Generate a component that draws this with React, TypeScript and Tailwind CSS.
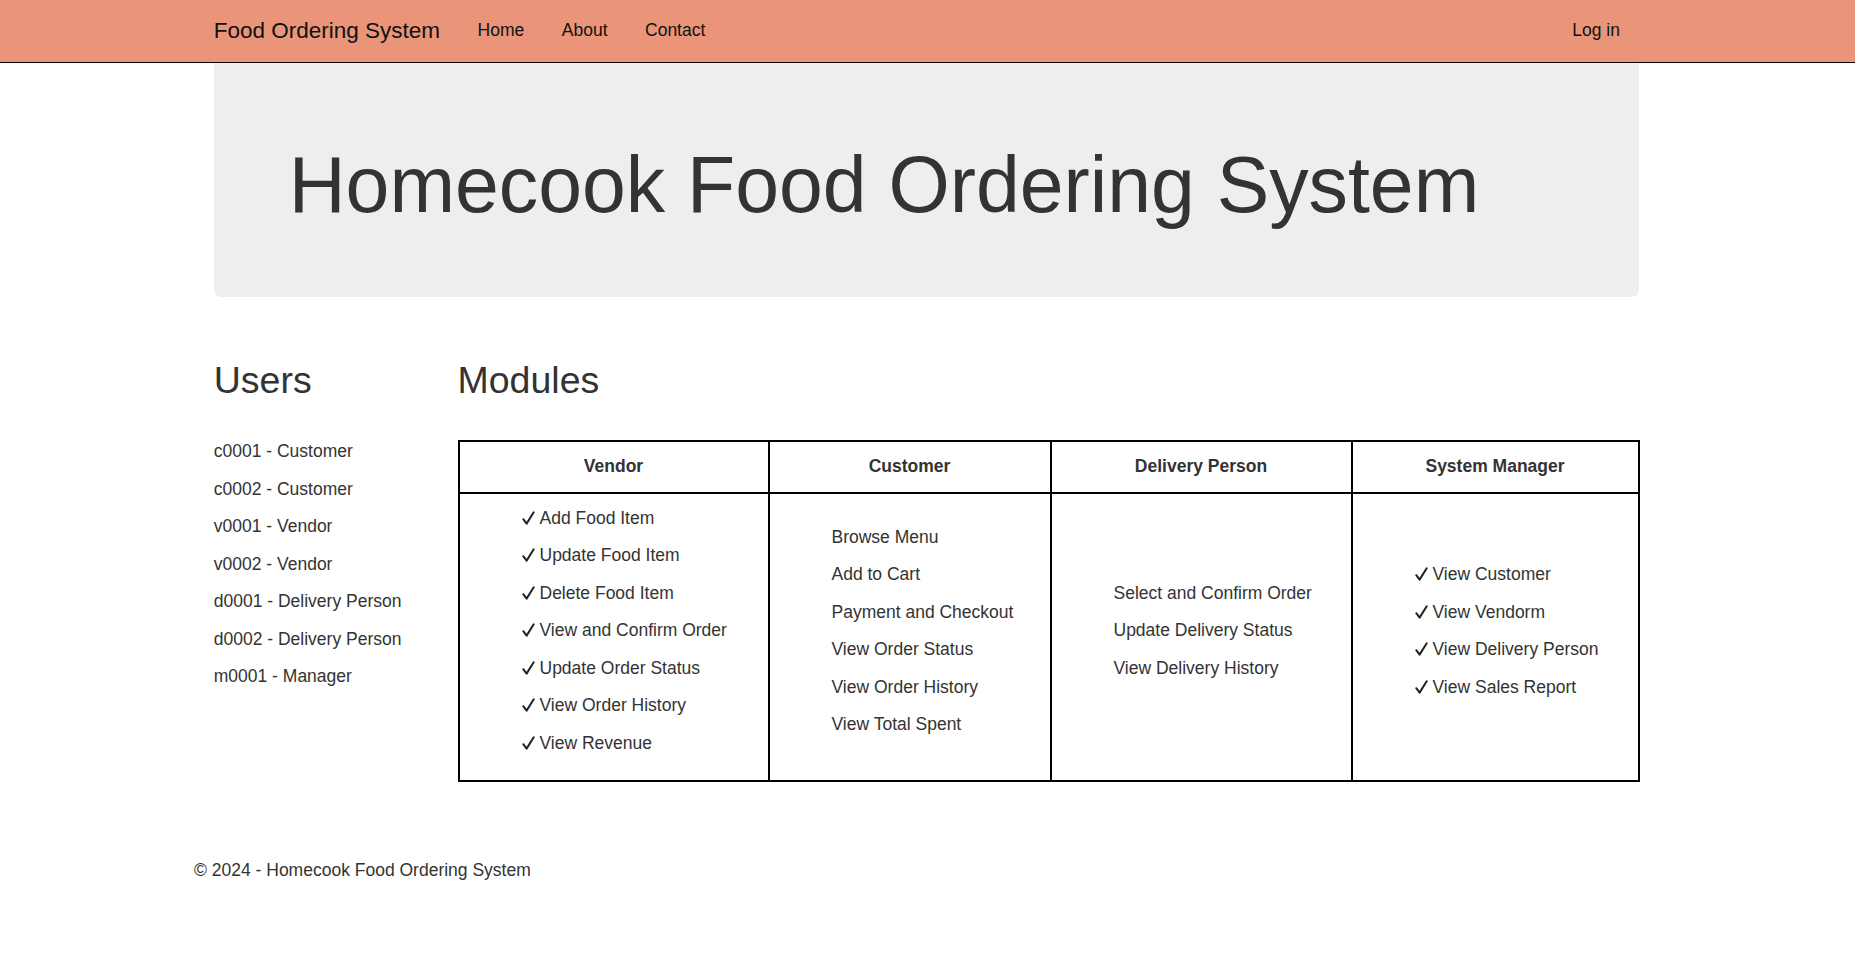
import React from "react";

const vendorItems = [
    "Add Food Item",
    "Update Food Item",
    "Delete Food Item",
    "View and Confirm Order",
    "Update Order Status",
    "View Order History",
    "View Revenue",
];

const customerItems = [
    "Browse Menu",
    "Add to Cart",
    "Payment and Checkout",
    "View Order Status",
    "View Order History",
    "View Total Spent",
];

const deliveryItems = ["Select and Confirm Order", "Update Delivery Status", "View Delivery History"];

const managerItems = ["View Customer", "View Vendorm", "View Delivery Person", "View Sales Report"];

const users = [
    "c0001 - Customer",
    "c0002 - Customer",
    "v0001 - Vendor",
    "v0002 - Vendor",
    "d0001 - Delivery Person",
    "d0002 - Delivery Person",
    "m0001 - Manager",
];

function Check() {
    return (
        <svg
            width="13"
            height="14"
            viewBox="0 0 13 14"
            className="inline-block mr-[5px] align-[-1px]"
            fill="none"
            stroke="#222"
            strokeWidth="2"
            strokeLinecap="round"
            strokeLinejoin="round"
        >
            <path d="M1.3 8.2 L4.6 12.6 L11.7 1.3" />
        </svg>
    );
}

function ItemList({ items, checked }: { items: string[]; checked?: boolean }) {
    return (
        <ul className="pl-[52px] pb-[12.5px] flex flex-col gap-[12.5px] text-left">
            {items.map((item) => (
                <li key={item} className="leading-[25px] whitespace-nowrap">
                    {checked && <Check />}
                    {item}
                </li>
            ))}
        </ul>
    );
}

export default function App() {
    return (
        <div className="min-h-screen bg-white text-[#333] font-['Liberation_Sans',Arial,sans-serif] text-[17.5px] leading-[25px]">
            <nav className="h-[63px] bg-[#ea957a] border-b border-black">
                <div className="ml-[195px] w-[1462.5px] px-[18.75px] h-full flex items-center pb-[2px] text-[#111]">
                    <a className="text-[22.5px] leading-[25px] mr-[18.75px]">Food Ordering System</a>
                    <a className="px-[18.75px]">Home</a>
                    <a className="px-[18.75px]">About</a>
                    <a className="px-[18.75px]">Contact</a>
                    <a className="ml-auto px-[18.75px]">Log in</a>
                </div>
            </nav>

            <div className="ml-[195px] w-[1462.5px] px-[18.75px]">
                <div className="bg-[#eeeeee] rounded-b-[7.5px] pl-[75px] pt-[79px] pb-[68px]">
                    <h1 className="text-[78.75px] leading-[87px] text-[#333] whitespace-nowrap">
                        Homecook Food Ordering System
                    </h1>
                </div>

                <div className="flex mt-[62.5px]">
                    <div className="w-[243.75px] shrink-0">
                        <h2 className="text-[37.5px] leading-[41.25px]">Users</h2>
                        <div className="pt-[38.5px] flex flex-col gap-[12.5px]">
                            {users.map((u) => (
                                <p key={u} className="leading-[25px]">
                                    {u}
                                </p>
                            ))}
                        </div>
                    </div>

                    <div className="flex-1">
                        <h2 className="text-[37.5px] leading-[41.25px]">Modules</h2>
                        <div className="pt-[39px]">
                            <table className="table-fixed border-collapse border-2 border-black w-[1180px]">
                                <colgroup>
                                    <col className="w-[310px]" />
                                    <col className="w-[282px]" />
                                    <col className="w-[301px]" />
                                    <col className="w-[287px]" />
                                </colgroup>
                                <thead>
                                    <tr>
                                        <th className="border-2 border-black py-[12.5px] font-bold text-center">Vendor</th>
                                        <th className="border-2 border-black py-[12.5px] font-bold text-center">Customer</th>
                                        <th className="border-2 border-black py-[12.5px] font-bold text-center">Delivery Person</th>
                                        <th className="border-2 border-black py-[12.5px] font-bold text-center">System Manager</th>
                                    </tr>
                                </thead>
                                <tbody>
                                    <tr>
                                        <td className="border-2 border-black px-[10px] py-[12px] align-middle">
                                            <ItemList items={vendorItems} checked />
                                        </td>
                                        <td className="border-2 border-black px-[10px] py-[12px] align-middle">
                                            <ItemList items={customerItems} />
                                        </td>
                                        <td className="border-2 border-black px-[10px] py-[12px] align-middle">
                                            <ItemList items={deliveryItems} />
                                        </td>
                                        <td className="border-2 border-black px-[10px] py-[12px] align-middle">
                                            <ItemList items={managerItems} checked />
                                        </td>
                                    </tr>
                                </tbody>
                            </table>
                        </div>
                    </div>
                </div>
            </div>

            <footer className="ml-[194px] w-[1462.5px] mt-[76px] pb-[60px]">
                <p className="leading-[25px]">© 2024 - Homecook Food Ordering System</p>
            </footer>
        </div>
    );
}
